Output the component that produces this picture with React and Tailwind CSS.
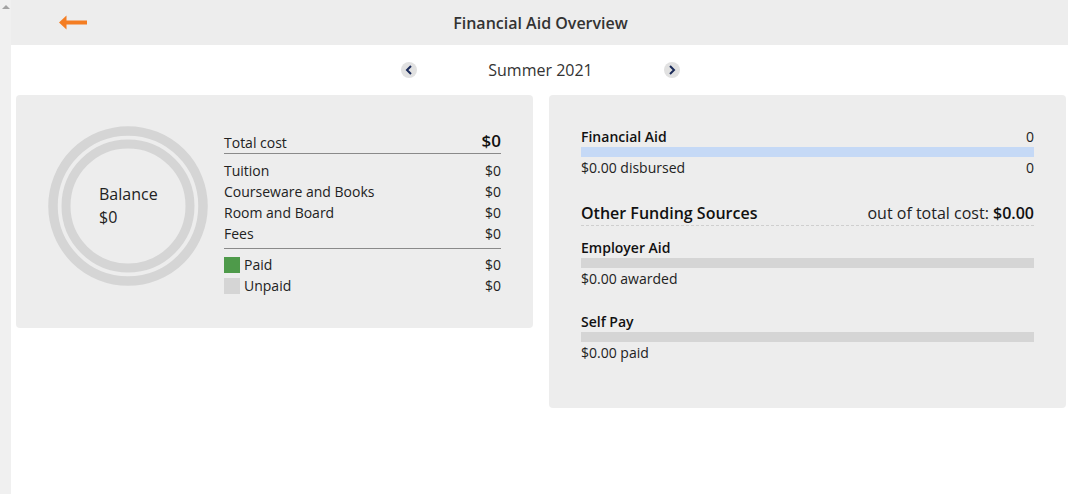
import React from 'react';

const font = { fontFamily: '"Open Sans", "Noto Sans", sans-serif' };

function BackArrow() {
  return (
    <svg width="29" height="15" viewBox="0 0 29 15">
      <path d="M0 7.5 L7.5 0.5 L7.5 5.5 L28 5.5 L28 9.5 L7.5 9.5 L7.5 14.5 Z" fill="#f47d22" />
    </svg>
  );
}

function Chevron({ dir }) {
  return (
    <button className="w-[16px] h-[16px] rounded-full bg-[#e1e1e1] flex items-center justify-center">
      <svg width="10" height="10" viewBox="0 0 10 10">
        {dir === 'left' ? (
          <path d="M7 1 L3 5 L7 9" stroke="#1b2b5a" strokeWidth="2" fill="none" />
        ) : (
          <path d="M3 1 L7 5 L3 9" stroke="#1b2b5a" strokeWidth="2" fill="none" />
        )}
      </svg>
    </button>
  );
}

function Rings() {
  return (
    <div className="relative w-[160px] h-[160px] shrink-0">
      <svg width="160" height="160" viewBox="0 0 160 160" className="absolute inset-0">
        <circle cx="80" cy="80" r="75" stroke="#d5d5d5" strokeWidth="9.5" fill="none" />
        <circle cx="80" cy="80" r="62" stroke="#d5d5d5" strokeWidth="9" fill="none" />
      </svg>
      <div className="absolute left-[51px] top-[57px] text-[16px] leading-[23px] text-[#222]">
        <div>Balance</div>
        <div>$0</div>
      </div>
    </div>
  );
}

const costRows = ['Tuition', 'Courseware and Books', 'Room and Board', 'Fees'];

function CostTable() {
  return (
    <div className="w-[277px] ml-[16px] mt-[5px] text-[14px] text-[#222]">
      <div className="h-[23px] flex items-end justify-between border-b border-[#8a8a8a]">
        <span className="leading-[21px]">Total cost</span>
        <span className="text-[17px] font-semibold leading-[25px] text-[#111]">$0</span>
      </div>
      <div className="pt-[6px] pb-[4px] border-b border-[#8a8a8a]">
        {costRows.map((r) => (
          <div key={r} className="flex justify-between leading-[21px]">
            <span>{r}</span>
            <span>$0</span>
          </div>
        ))}
      </div>
      <div className="pt-[5px]">
        <div className="flex justify-between items-center leading-[21px]">
          <span className="flex items-center gap-[4px]">
            <span className="w-[16px] h-[16px] bg-[#4e9a4a]" />
            Paid
          </span>
          <span>$0</span>
        </div>
        <div className="flex justify-between items-center leading-[21px]">
          <span className="flex items-center gap-[4px]">
            <span className="w-[16px] h-[16px] bg-[#d5d5d5]" />
            Unpaid
          </span>
          <span>$0</span>
        </div>
      </div>
    </div>
  );
}

function Source({ title, note, className }) {
  return (
    <div className={className}>
      <div className="text-[14px] font-semibold leading-[20px] text-[#111]">{title}</div>
      <div className="h-[10px] bg-[#d5d5d5]" />
      <div className="text-[14px] leading-[21px] text-[#222]">{note}</div>
    </div>
  );
}

export default function App() {
  return (
    <div className="flex w-[1068px] h-[494px] bg-white overflow-hidden" style={font}>
      {/* scrollbar strip */}
      <div className="w-[11px] bg-[#f0f0f0] shrink-0 pt-[5px] pl-[2px]">
        <div className="w-0 h-0 border-l-[4px] border-r-[4px] border-b-[4px] border-l-transparent border-r-transparent border-b-[#a3a3a3]" />
      </div>

      <div className="flex-1 flex flex-col">
        <header className="h-[45px] shrink-0 bg-[#ededed] grid grid-cols-[1fr_auto_1fr] items-center">
          <div className="pl-[48px] flex items-center">
            <BackArrow />
          </div>
          <h1 className="text-[16px] font-semibold text-[#333] pl-[2px]">Financial Aid Overview</h1>
          <div />
        </header>

        <div className="h-[50px] shrink-0 flex items-center justify-center pl-[2px]">
          <Chevron dir="left" />
          <span className="w-[247px] text-center text-[16px] text-[#333]">Summer 2021</span>
          <Chevron dir="right" />
        </div>

        <div className="flex items-start gap-[16px] pl-[5px]">
          <section className="w-[517px] h-[233px] bg-[#ededed] rounded-[4px] flex items-start pl-[32px] pt-[31px]">
            <Rings />
            <CostTable />
          </section>

          <section className="w-[517px] bg-[#ededed] rounded-[4px] px-[32px] pt-[32px] pb-[45px]">
            <div className="flex justify-between text-[14px] leading-[20px]">
              <span className="font-semibold text-[#111]">Financial Aid</span>
              <span className="text-[#222]">0</span>
            </div>
            <div className="h-[10px] bg-[#c5d9f6]" />
            <div className="flex justify-between text-[14px] leading-[21px] text-[#222]">
              <span>$0.00 disbursed</span>
              <span>0</span>
            </div>

            <div className="mt-[24px] flex justify-between items-baseline border-b border-dashed border-[#cfcfcf] text-[16px] leading-[22px] pb-[1px]">
              <span className="font-semibold text-[#111]">Other Funding Sources</span>
              <span className="text-[#222]">
                out of total cost: <span className="font-semibold text-[#111]">$0.00</span>
              </span>
            </div>

            <Source title="Employer Aid" note="$0.00 awarded" className="mt-[12px]" />
            <Source title="Self Pay" note="$0.00 paid" className="mt-[23px]" />
          </section>
        </div>
      </div>
    </div>
  );
}
